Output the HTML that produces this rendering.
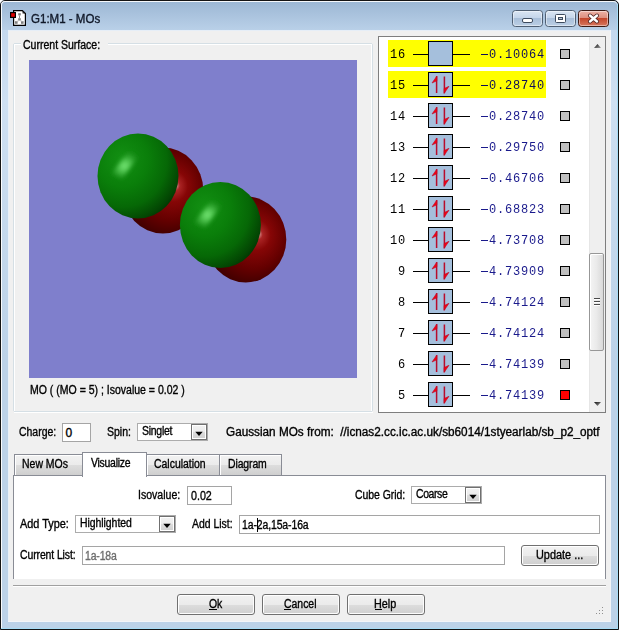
<!DOCTYPE html>
<html><head><meta charset="utf-8"><title>G1:M1 - MOs</title>
<style>
html,body{margin:0;padding:0;}
body{width:619px;height:630px;position:relative;overflow:hidden;background:#fff;font-family:"Liberation Sans", sans-serif;}
.t{position:absolute;line-height:20px;height:20px;white-space:pre;}
svg{position:absolute;}
</style></head><body>

<div style="position:absolute;left:0px;top:0px;width:619px;height:630px;background:#c4d7ec;border-radius:5px 5px 0 0;"></div>
<div style="position:absolute;left:1px;top:1px;width:617px;height:29px;background:linear-gradient(#9bb7d4 0%,#a9c2dd 45%,#b9d0e8 100%);border-radius:4px 4px 0 0;"></div>
<div style="position:absolute;left:1px;top:30px;width:7px;height:599px;background:linear-gradient(#c4d8ee,#cfe0f2 12%,#c4d8ec 35%,#bcd2e8 55%,#bcd2e8);"></div>
<div style="position:absolute;left:611px;top:30px;width:7px;height:599px;background:linear-gradient(#c4d8ee,#cfe0f2 12%,#c4d8ec 35%,#bcd2e8 55%,#bcd2e8);"></div>
<div style="position:absolute;left:1px;top:622px;width:617px;height:7px;background:#bcd2e8;"></div>
<div style="position:absolute;left:0;top:0;width:617px;height:628px;border:1px solid #141414;border-radius:5px 5px 0 0;"></div>
<div style="position:absolute;left:1px;top:1px;width:615px;height:627px;border:1px solid rgba(255,255,255,0.9);border-bottom:none;border-right:none;border-radius:4px 4px 0 0;"></div>
<div style="position:absolute;left:617px;top:4px;width:1px;height:625px;background:#a6dcf6;"></div>
<div style="position:absolute;left:1px;top:628px;width:617px;height:1px;background:#a6dcf6;"></div>
<div style="position:absolute;left:8px;top:30px;width:603px;height:592px;background:#f0f0f0;"></div>
<div style="position:absolute;left:8px;top:30px;width:603px;height:1px;background:#e6eef7;"></div>
<div style="position:absolute;left:8px;top:30px;width:1px;height:592px;background:#e9f0f8;"></div>
<div style="position:absolute;left:610px;top:30px;width:1px;height:592px;background:#f3f5f8;"></div>
<div style="position:absolute;left:8px;top:621px;width:603px;height:1px;background:#f3f5f8;"></div>
<svg style="left:9px;top:9px" width="18" height="18" viewBox="0 0 18 18">
<path d="M4.6 1.6 H13.4 L16.4 4.6 V16.4 H4.6 Z" fill="#fff" stroke="#000" stroke-width="1.2"/>
<path d="M13.4 1.6 L16.4 4.6 L13.6 4.4 Z" fill="#222"/>
<rect x="1.6" y="3.6" width="4.8" height="4.8" fill="#e00000" stroke="#000" stroke-width="1.2"/>
<rect x="9.2" y="4.2" width="2.6" height="2.2" fill="#808080"/>
<rect x="9.2" y="9.2" width="2.6" height="2.2" fill="#808080"/>
<rect x="10" y="6.4" width="1" height="2.8" fill="#909090"/>
<rect x="6" y="12.2" width="2.6" height="2.6" fill="#808080"/>
<rect x="12" y="12.2" width="2.6" height="2.6" fill="#808080"/>
<path d="M10.5 11.4 L7.5 12.5 M10.5 11.4 L13.5 12.5" stroke="#b0b0b0" stroke-width="0.8"/>
</svg>
<div class="t" style="left:30.50px;top:9px;font-size:12px;color:#101828;transform:scaleX(0.9611);transform-origin:0 0;-webkit-text-stroke:0.35px #101828;">G1:M1 - MOs</div>
<svg style="left:512px;top:10px" width="31" height="17" viewBox="0 0 31 17"><defs><linearGradient id="gcap" x1="0" y1="0" x2="0" y2="1"><stop offset="0" stop-color="#dbe6f3"/><stop offset="0.45" stop-color="#c5d6ea"/><stop offset="0.5" stop-color="#a9bfd9"/><stop offset="1" stop-color="#bcd0e6"/></linearGradient><linearGradient id="gclose" x1="0" y1="0" x2="0" y2="1"><stop offset="0" stop-color="#eeb4a8"/><stop offset="0.45" stop-color="#de9080"/><stop offset="0.5" stop-color="#c4472c"/><stop offset="1" stop-color="#d77a62"/></linearGradient></defs><rect x="0.5" y="0.5" width="30" height="16" rx="3" ry="3" fill="url(#gcap)" stroke="#4f5f73"/><rect x="1.5" y="1.5" width="28" height="14" rx="2" ry="2" fill="none" stroke="rgba(255,255,255,0.45)"/><rect x="10.5" y="8.5" width="10" height="4" rx="1.5" fill="#fff" stroke="#3d4b5e"/></svg>
<svg style="left:545px;top:10px" width="31" height="17" viewBox="0 0 31 17"><defs><linearGradient id="gcap" x1="0" y1="0" x2="0" y2="1"><stop offset="0" stop-color="#dbe6f3"/><stop offset="0.45" stop-color="#c5d6ea"/><stop offset="0.5" stop-color="#a9bfd9"/><stop offset="1" stop-color="#bcd0e6"/></linearGradient><linearGradient id="gclose" x1="0" y1="0" x2="0" y2="1"><stop offset="0" stop-color="#eeb4a8"/><stop offset="0.45" stop-color="#de9080"/><stop offset="0.5" stop-color="#c4472c"/><stop offset="1" stop-color="#d77a62"/></linearGradient></defs><rect x="0.5" y="0.5" width="30" height="16" rx="3" ry="3" fill="url(#gcap)" stroke="#4f5f73"/><rect x="1.5" y="1.5" width="28" height="14" rx="2" ry="2" fill="none" stroke="rgba(255,255,255,0.45)"/><rect x="10.5" y="4.5" width="10" height="8" rx="1" fill="#fff" stroke="#3d4b5e"/><rect x="13.5" y="7.5" width="4" height="2" fill="#b8c4d2" stroke="#3d4b5e"/></svg>
<svg style="left:578px;top:10px" width="31" height="17" viewBox="0 0 31 17"><defs><linearGradient id="gcap" x1="0" y1="0" x2="0" y2="1"><stop offset="0" stop-color="#dbe6f3"/><stop offset="0.45" stop-color="#c5d6ea"/><stop offset="0.5" stop-color="#a9bfd9"/><stop offset="1" stop-color="#bcd0e6"/></linearGradient><linearGradient id="gclose" x1="0" y1="0" x2="0" y2="1"><stop offset="0" stop-color="#eeb4a8"/><stop offset="0.45" stop-color="#de9080"/><stop offset="0.5" stop-color="#c4472c"/><stop offset="1" stop-color="#d77a62"/></linearGradient></defs><rect x="0.5" y="0.5" width="30" height="16" rx="3" ry="3" fill="url(#gclose)" stroke="#3c1a14"/><rect x="1.5" y="1.5" width="28" height="14" rx="2" ry="2" fill="none" stroke="rgba(255,255,255,0.45)"/><path d="M12 5.5 L19 11.5 M19 5.5 L12 11.5" stroke="#4a2020" stroke-width="4" stroke-linecap="round"/><path d="M12 5.5 L19 11.5 M19 5.5 L12 11.5" stroke="#fff" stroke-width="2.4" stroke-linecap="round"/></svg>
<div style="position:absolute;left:13px;top:43px;width:358px;height:367px;border:1px solid #d5dfe5;border-radius:2px;"></div>
<div style="position:absolute;left:14px;top:44px;width:1px;height:367px;background:#fff;"></div>
<div style="position:absolute;left:15px;top:44px;width:356px;height:1px;background:#fff;"></div>
<div style="position:absolute;left:371px;top:44px;width:1px;height:367px;background:#fff;"></div>
<div style="position:absolute;left:14px;top:412px;width:359px;height:1px;background:#fff;"></div>
<div style="position:absolute;left:21px;top:36px;width:87px;height:14px;background:#f0f0f0;"></div>
<div class="t" style="left:23.00px;top:35px;font-size:12px;color:#000;transform:scaleX(0.8759);transform-origin:0 0;-webkit-text-stroke:0.35px #000;">Current Surface:</div>
<svg style="left:29px;top:60px" width="328" height="318" viewBox="29 60 328 318">
<defs>
<radialGradient id="gg" cx="0.32" cy="0.33" r="0.8" fx="0.3" fy="0.3">
<stop offset="0" stop-color="#139013"/><stop offset="0.4" stop-color="#0a7e0a"/><stop offset="0.68" stop-color="#066806"/><stop offset="0.88" stop-color="#034603"/><stop offset="1" stop-color="#012a01"/>
</radialGradient>
<radialGradient id="gr" cx="0.55" cy="0.47" r="0.6" fx="0.66" fy="0.44">
<stop offset="0" stop-color="#dc9a9a"/><stop offset="0.1" stop-color="#aa2424"/><stop offset="0.3" stop-color="#860606"/><stop offset="0.65" stop-color="#640000"/><stop offset="1" stop-color="#380000"/>
</radialGradient>
<radialGradient id="hl" cx="0.42" cy="0.55" r="0.6">
<stop offset="0" stop-color="#7ef07e" stop-opacity="0.95"/><stop offset="0.4" stop-color="#58cc58" stop-opacity="0.75"/><stop offset="0.8" stop-color="#2ea02e" stop-opacity="0.25"/><stop offset="1" stop-color="#1a8a1a" stop-opacity="0"/>
</radialGradient>
<filter id="bl" x="-50%" y="-50%" width="200%" height="200%"><feGaussianBlur stdDeviation="2.2"/></filter>
</defs>
<rect x="29" y="60" width="328" height="318" fill="#7f7fcc"/>
<ellipse cx="162.9" cy="190.6" rx="40.5" ry="43" fill="url(#gr)"/>
<ellipse cx="138" cy="176" rx="40.5" ry="42.5" fill="url(#gg)"/>
<path d="M111 174 L128 152 L143 150 L122 179 Z" fill="url(#hl)" filter="url(#bl)"/>
<ellipse cx="245.8" cy="239.4" rx="40.5" ry="43" fill="url(#gr)"/>
<ellipse cx="220.4" cy="225" rx="40.5" ry="43" fill="url(#gg)"/>
<path d="M194 223 L211 201 L226 199 L205 228 Z" fill="url(#hl)" filter="url(#bl)"/>
</svg>
<div class="t" style="left:30.12px;top:380px;font-size:12px;color:#000;transform:scaleX(0.8760);transform-origin:0 0;-webkit-text-stroke:0.35px #000;">MO ( (MO = 5) ; Isovalue = 0.02 )</div>
<div style="position:absolute;left:378px;top:36px;width:226px;height:375px;border:1px solid #7e7e7e;background:#fff;"></div>
<div style="position:absolute;left:388px;top:40px;width:158px;height:27px;background:#ffff00;"></div>
<div class="t" style="left:390.4px;top:45px;font-size:13.33px;color:#000;font-family:'Liberation Mono', monospace;letter-spacing:0.889px;transform:scaleX(0.9);transform-origin:0 0;">16</div>
<div style="position:absolute;left:413px;top:54px;width:15px;height:1px;background:#000;"></div>
<div style="position:absolute;left:453px;top:54px;width:17px;height:1px;background:#000;"></div>
<div style="position:absolute;left:428px;top:41px;width:23px;height:23px;background:#a5bfdc;border:1px solid #000;"></div>
<div style="position:absolute;left:481px;top:54px;width:7px;height:1px;background:#0d0d5a;"></div>
<div class="t" style="left:488.6px;top:45px;font-size:13.33px;color:#0d0d5a;font-family:'Liberation Mono', monospace;letter-spacing:0.889px;transform:scaleX(0.9);transform-origin:0 0;">0.10064</div>
<div style="position:absolute;left:560px;top:49px;width:8px;height:8px;background:#c0c0c0;border:1px solid #000;"></div>
<div style="position:absolute;left:388px;top:71px;width:158px;height:27px;background:#ffff00;"></div>
<div class="t" style="left:390.4px;top:76px;font-size:13.33px;color:#000;font-family:'Liberation Mono', monospace;letter-spacing:0.889px;transform:scaleX(0.9);transform-origin:0 0;">15</div>
<div style="position:absolute;left:413px;top:85px;width:15px;height:1px;background:#000;"></div>
<div style="position:absolute;left:453px;top:85px;width:17px;height:1px;background:#000;"></div>
<div style="position:absolute;left:428px;top:72px;width:23px;height:23px;background:#a5bfdc;border:1px solid #000;"></div>
<svg style="left:428px;top:72px" width="25" height="25" viewBox="0 0 25 25">
<path d="M8.6 4.2 V21" stroke="#b80c2c" stroke-width="1.5"/><path d="M8.9 4 L4 11 L8.9 8.8 Z" fill="#f40010" stroke="#b80c2c" stroke-width="0.6" stroke-linejoin="round"/>
<path d="M16.4 4.5 V21.2" stroke="#b80c2c" stroke-width="1.5"/><path d="M16.1 21.4 L21 14.3 L16.1 16.5 Z" fill="#f40010" stroke="#b80c2c" stroke-width="0.6" stroke-linejoin="round"/>
</svg>
<div style="position:absolute;left:481px;top:85px;width:7px;height:1px;background:#0d0d5a;"></div>
<div class="t" style="left:488.6px;top:76px;font-size:13.33px;color:#0d0d5a;font-family:'Liberation Mono', monospace;letter-spacing:0.889px;transform:scaleX(0.9);transform-origin:0 0;">0.28740</div>
<div style="position:absolute;left:560px;top:80px;width:8px;height:8px;background:#c0c0c0;border:1px solid #000;"></div>
<div class="t" style="left:390.4px;top:107px;font-size:13.33px;color:#000;font-family:'Liberation Mono', monospace;letter-spacing:0.889px;transform:scaleX(0.9);transform-origin:0 0;">14</div>
<div style="position:absolute;left:413px;top:116px;width:15px;height:1px;background:#000;"></div>
<div style="position:absolute;left:453px;top:116px;width:17px;height:1px;background:#000;"></div>
<div style="position:absolute;left:428px;top:103px;width:23px;height:23px;background:#a5bfdc;border:1px solid #000;"></div>
<svg style="left:428px;top:103px" width="25" height="25" viewBox="0 0 25 25">
<path d="M8.6 4.2 V21" stroke="#b80c2c" stroke-width="1.5"/><path d="M8.9 4 L4 11 L8.9 8.8 Z" fill="#f40010" stroke="#b80c2c" stroke-width="0.6" stroke-linejoin="round"/>
<path d="M16.4 4.5 V21.2" stroke="#b80c2c" stroke-width="1.5"/><path d="M16.1 21.4 L21 14.3 L16.1 16.5 Z" fill="#f40010" stroke="#b80c2c" stroke-width="0.6" stroke-linejoin="round"/>
</svg>
<div style="position:absolute;left:481px;top:116px;width:7px;height:1px;background:#1a1a8c;"></div>
<div class="t" style="left:488.6px;top:107px;font-size:13.33px;color:#1a1a8c;font-family:'Liberation Mono', monospace;letter-spacing:0.889px;transform:scaleX(0.9);transform-origin:0 0;">0.28740</div>
<div style="position:absolute;left:560px;top:111px;width:8px;height:8px;background:#c0c0c0;border:1px solid #000;"></div>
<div class="t" style="left:390.4px;top:138px;font-size:13.33px;color:#000;font-family:'Liberation Mono', monospace;letter-spacing:0.889px;transform:scaleX(0.9);transform-origin:0 0;">13</div>
<div style="position:absolute;left:413px;top:147px;width:15px;height:1px;background:#000;"></div>
<div style="position:absolute;left:453px;top:147px;width:17px;height:1px;background:#000;"></div>
<div style="position:absolute;left:428px;top:134px;width:23px;height:23px;background:#a5bfdc;border:1px solid #000;"></div>
<svg style="left:428px;top:134px" width="25" height="25" viewBox="0 0 25 25">
<path d="M8.6 4.2 V21" stroke="#b80c2c" stroke-width="1.5"/><path d="M8.9 4 L4 11 L8.9 8.8 Z" fill="#f40010" stroke="#b80c2c" stroke-width="0.6" stroke-linejoin="round"/>
<path d="M16.4 4.5 V21.2" stroke="#b80c2c" stroke-width="1.5"/><path d="M16.1 21.4 L21 14.3 L16.1 16.5 Z" fill="#f40010" stroke="#b80c2c" stroke-width="0.6" stroke-linejoin="round"/>
</svg>
<div style="position:absolute;left:481px;top:147px;width:7px;height:1px;background:#1a1a8c;"></div>
<div class="t" style="left:488.6px;top:138px;font-size:13.33px;color:#1a1a8c;font-family:'Liberation Mono', monospace;letter-spacing:0.889px;transform:scaleX(0.9);transform-origin:0 0;">0.29750</div>
<div style="position:absolute;left:560px;top:142px;width:8px;height:8px;background:#c0c0c0;border:1px solid #000;"></div>
<div class="t" style="left:390.4px;top:169px;font-size:13.33px;color:#000;font-family:'Liberation Mono', monospace;letter-spacing:0.889px;transform:scaleX(0.9);transform-origin:0 0;">12</div>
<div style="position:absolute;left:413px;top:178px;width:15px;height:1px;background:#000;"></div>
<div style="position:absolute;left:453px;top:178px;width:17px;height:1px;background:#000;"></div>
<div style="position:absolute;left:428px;top:165px;width:23px;height:23px;background:#a5bfdc;border:1px solid #000;"></div>
<svg style="left:428px;top:165px" width="25" height="25" viewBox="0 0 25 25">
<path d="M8.6 4.2 V21" stroke="#b80c2c" stroke-width="1.5"/><path d="M8.9 4 L4 11 L8.9 8.8 Z" fill="#f40010" stroke="#b80c2c" stroke-width="0.6" stroke-linejoin="round"/>
<path d="M16.4 4.5 V21.2" stroke="#b80c2c" stroke-width="1.5"/><path d="M16.1 21.4 L21 14.3 L16.1 16.5 Z" fill="#f40010" stroke="#b80c2c" stroke-width="0.6" stroke-linejoin="round"/>
</svg>
<div style="position:absolute;left:481px;top:178px;width:7px;height:1px;background:#1a1a8c;"></div>
<div class="t" style="left:488.6px;top:169px;font-size:13.33px;color:#1a1a8c;font-family:'Liberation Mono', monospace;letter-spacing:0.889px;transform:scaleX(0.9);transform-origin:0 0;">0.46706</div>
<div style="position:absolute;left:560px;top:173px;width:8px;height:8px;background:#c0c0c0;border:1px solid #000;"></div>
<div class="t" style="left:390.4px;top:200px;font-size:13.33px;color:#000;font-family:'Liberation Mono', monospace;letter-spacing:0.889px;transform:scaleX(0.9);transform-origin:0 0;">11</div>
<div style="position:absolute;left:413px;top:209px;width:15px;height:1px;background:#000;"></div>
<div style="position:absolute;left:453px;top:209px;width:17px;height:1px;background:#000;"></div>
<div style="position:absolute;left:428px;top:196px;width:23px;height:23px;background:#a5bfdc;border:1px solid #000;"></div>
<svg style="left:428px;top:196px" width="25" height="25" viewBox="0 0 25 25">
<path d="M8.6 4.2 V21" stroke="#b80c2c" stroke-width="1.5"/><path d="M8.9 4 L4 11 L8.9 8.8 Z" fill="#f40010" stroke="#b80c2c" stroke-width="0.6" stroke-linejoin="round"/>
<path d="M16.4 4.5 V21.2" stroke="#b80c2c" stroke-width="1.5"/><path d="M16.1 21.4 L21 14.3 L16.1 16.5 Z" fill="#f40010" stroke="#b80c2c" stroke-width="0.6" stroke-linejoin="round"/>
</svg>
<div style="position:absolute;left:481px;top:209px;width:7px;height:1px;background:#1a1a8c;"></div>
<div class="t" style="left:488.6px;top:200px;font-size:13.33px;color:#1a1a8c;font-family:'Liberation Mono', monospace;letter-spacing:0.889px;transform:scaleX(0.9);transform-origin:0 0;">0.68823</div>
<div style="position:absolute;left:560px;top:204px;width:8px;height:8px;background:#c0c0c0;border:1px solid #000;"></div>
<div class="t" style="left:390.4px;top:231px;font-size:13.33px;color:#000;font-family:'Liberation Mono', monospace;letter-spacing:0.889px;transform:scaleX(0.9);transform-origin:0 0;">10</div>
<div style="position:absolute;left:413px;top:240px;width:15px;height:1px;background:#000;"></div>
<div style="position:absolute;left:453px;top:240px;width:17px;height:1px;background:#000;"></div>
<div style="position:absolute;left:428px;top:227px;width:23px;height:23px;background:#a5bfdc;border:1px solid #000;"></div>
<svg style="left:428px;top:227px" width="25" height="25" viewBox="0 0 25 25">
<path d="M8.6 4.2 V21" stroke="#b80c2c" stroke-width="1.5"/><path d="M8.9 4 L4 11 L8.9 8.8 Z" fill="#f40010" stroke="#b80c2c" stroke-width="0.6" stroke-linejoin="round"/>
<path d="M16.4 4.5 V21.2" stroke="#b80c2c" stroke-width="1.5"/><path d="M16.1 21.4 L21 14.3 L16.1 16.5 Z" fill="#f40010" stroke="#b80c2c" stroke-width="0.6" stroke-linejoin="round"/>
</svg>
<div style="position:absolute;left:481px;top:240px;width:7px;height:1px;background:#1a1a8c;"></div>
<div class="t" style="left:488.6px;top:231px;font-size:13.33px;color:#1a1a8c;font-family:'Liberation Mono', monospace;letter-spacing:0.889px;transform:scaleX(0.9);transform-origin:0 0;">4.73708</div>
<div style="position:absolute;left:560px;top:235px;width:8px;height:8px;background:#c0c0c0;border:1px solid #000;"></div>
<div class="t" style="left:398.4px;top:262px;font-size:13.33px;color:#000;font-family:'Liberation Mono', monospace;letter-spacing:0.889px;transform:scaleX(0.9);transform-origin:0 0;">9</div>
<div style="position:absolute;left:413px;top:271px;width:15px;height:1px;background:#000;"></div>
<div style="position:absolute;left:453px;top:271px;width:17px;height:1px;background:#000;"></div>
<div style="position:absolute;left:428px;top:258px;width:23px;height:23px;background:#a5bfdc;border:1px solid #000;"></div>
<svg style="left:428px;top:258px" width="25" height="25" viewBox="0 0 25 25">
<path d="M8.6 4.2 V21" stroke="#b80c2c" stroke-width="1.5"/><path d="M8.9 4 L4 11 L8.9 8.8 Z" fill="#f40010" stroke="#b80c2c" stroke-width="0.6" stroke-linejoin="round"/>
<path d="M16.4 4.5 V21.2" stroke="#b80c2c" stroke-width="1.5"/><path d="M16.1 21.4 L21 14.3 L16.1 16.5 Z" fill="#f40010" stroke="#b80c2c" stroke-width="0.6" stroke-linejoin="round"/>
</svg>
<div style="position:absolute;left:481px;top:271px;width:7px;height:1px;background:#1a1a8c;"></div>
<div class="t" style="left:488.6px;top:262px;font-size:13.33px;color:#1a1a8c;font-family:'Liberation Mono', monospace;letter-spacing:0.889px;transform:scaleX(0.9);transform-origin:0 0;">4.73909</div>
<div style="position:absolute;left:560px;top:266px;width:8px;height:8px;background:#c0c0c0;border:1px solid #000;"></div>
<div class="t" style="left:398.4px;top:293px;font-size:13.33px;color:#000;font-family:'Liberation Mono', monospace;letter-spacing:0.889px;transform:scaleX(0.9);transform-origin:0 0;">8</div>
<div style="position:absolute;left:413px;top:302px;width:15px;height:1px;background:#000;"></div>
<div style="position:absolute;left:453px;top:302px;width:17px;height:1px;background:#000;"></div>
<div style="position:absolute;left:428px;top:289px;width:23px;height:23px;background:#a5bfdc;border:1px solid #000;"></div>
<svg style="left:428px;top:289px" width="25" height="25" viewBox="0 0 25 25">
<path d="M8.6 4.2 V21" stroke="#b80c2c" stroke-width="1.5"/><path d="M8.9 4 L4 11 L8.9 8.8 Z" fill="#f40010" stroke="#b80c2c" stroke-width="0.6" stroke-linejoin="round"/>
<path d="M16.4 4.5 V21.2" stroke="#b80c2c" stroke-width="1.5"/><path d="M16.1 21.4 L21 14.3 L16.1 16.5 Z" fill="#f40010" stroke="#b80c2c" stroke-width="0.6" stroke-linejoin="round"/>
</svg>
<div style="position:absolute;left:481px;top:302px;width:7px;height:1px;background:#1a1a8c;"></div>
<div class="t" style="left:488.6px;top:293px;font-size:13.33px;color:#1a1a8c;font-family:'Liberation Mono', monospace;letter-spacing:0.889px;transform:scaleX(0.9);transform-origin:0 0;">4.74124</div>
<div style="position:absolute;left:560px;top:297px;width:8px;height:8px;background:#c0c0c0;border:1px solid #000;"></div>
<div class="t" style="left:398.4px;top:324px;font-size:13.33px;color:#000;font-family:'Liberation Mono', monospace;letter-spacing:0.889px;transform:scaleX(0.9);transform-origin:0 0;">7</div>
<div style="position:absolute;left:413px;top:333px;width:15px;height:1px;background:#000;"></div>
<div style="position:absolute;left:453px;top:333px;width:17px;height:1px;background:#000;"></div>
<div style="position:absolute;left:428px;top:320px;width:23px;height:23px;background:#a5bfdc;border:1px solid #000;"></div>
<svg style="left:428px;top:320px" width="25" height="25" viewBox="0 0 25 25">
<path d="M8.6 4.2 V21" stroke="#b80c2c" stroke-width="1.5"/><path d="M8.9 4 L4 11 L8.9 8.8 Z" fill="#f40010" stroke="#b80c2c" stroke-width="0.6" stroke-linejoin="round"/>
<path d="M16.4 4.5 V21.2" stroke="#b80c2c" stroke-width="1.5"/><path d="M16.1 21.4 L21 14.3 L16.1 16.5 Z" fill="#f40010" stroke="#b80c2c" stroke-width="0.6" stroke-linejoin="round"/>
</svg>
<div style="position:absolute;left:481px;top:333px;width:7px;height:1px;background:#1a1a8c;"></div>
<div class="t" style="left:488.6px;top:324px;font-size:13.33px;color:#1a1a8c;font-family:'Liberation Mono', monospace;letter-spacing:0.889px;transform:scaleX(0.9);transform-origin:0 0;">4.74124</div>
<div style="position:absolute;left:560px;top:328px;width:8px;height:8px;background:#c0c0c0;border:1px solid #000;"></div>
<div class="t" style="left:398.4px;top:355px;font-size:13.33px;color:#000;font-family:'Liberation Mono', monospace;letter-spacing:0.889px;transform:scaleX(0.9);transform-origin:0 0;">6</div>
<div style="position:absolute;left:413px;top:364px;width:15px;height:1px;background:#000;"></div>
<div style="position:absolute;left:453px;top:364px;width:17px;height:1px;background:#000;"></div>
<div style="position:absolute;left:428px;top:351px;width:23px;height:23px;background:#a5bfdc;border:1px solid #000;"></div>
<svg style="left:428px;top:351px" width="25" height="25" viewBox="0 0 25 25">
<path d="M8.6 4.2 V21" stroke="#b80c2c" stroke-width="1.5"/><path d="M8.9 4 L4 11 L8.9 8.8 Z" fill="#f40010" stroke="#b80c2c" stroke-width="0.6" stroke-linejoin="round"/>
<path d="M16.4 4.5 V21.2" stroke="#b80c2c" stroke-width="1.5"/><path d="M16.1 21.4 L21 14.3 L16.1 16.5 Z" fill="#f40010" stroke="#b80c2c" stroke-width="0.6" stroke-linejoin="round"/>
</svg>
<div style="position:absolute;left:481px;top:364px;width:7px;height:1px;background:#1a1a8c;"></div>
<div class="t" style="left:488.6px;top:355px;font-size:13.33px;color:#1a1a8c;font-family:'Liberation Mono', monospace;letter-spacing:0.889px;transform:scaleX(0.9);transform-origin:0 0;">4.74139</div>
<div style="position:absolute;left:560px;top:359px;width:8px;height:8px;background:#c0c0c0;border:1px solid #000;"></div>
<div class="t" style="left:398.4px;top:386px;font-size:13.33px;color:#000;font-family:'Liberation Mono', monospace;letter-spacing:0.889px;transform:scaleX(0.9);transform-origin:0 0;">5</div>
<div style="position:absolute;left:413px;top:395px;width:15px;height:1px;background:#000;"></div>
<div style="position:absolute;left:453px;top:395px;width:17px;height:1px;background:#000;"></div>
<div style="position:absolute;left:428px;top:382px;width:23px;height:23px;background:#a5bfdc;border:1px solid #000;"></div>
<svg style="left:428px;top:382px" width="25" height="25" viewBox="0 0 25 25">
<path d="M8.6 4.2 V21" stroke="#b80c2c" stroke-width="1.5"/><path d="M8.9 4 L4 11 L8.9 8.8 Z" fill="#f40010" stroke="#b80c2c" stroke-width="0.6" stroke-linejoin="round"/>
<path d="M16.4 4.5 V21.2" stroke="#b80c2c" stroke-width="1.5"/><path d="M16.1 21.4 L21 14.3 L16.1 16.5 Z" fill="#f40010" stroke="#b80c2c" stroke-width="0.6" stroke-linejoin="round"/>
</svg>
<div style="position:absolute;left:481px;top:395px;width:7px;height:1px;background:#1a1a8c;"></div>
<div class="t" style="left:488.6px;top:386px;font-size:13.33px;color:#1a1a8c;font-family:'Liberation Mono', monospace;letter-spacing:0.889px;transform:scaleX(0.9);transform-origin:0 0;">4.74139</div>
<div style="position:absolute;left:560px;top:390px;width:8px;height:8px;background:#ff0000;border:1px solid #000;"></div>
<div style="position:absolute;left:589px;top:37px;width:16px;height:375px;background:#efefef;border-left:1px solid #e6e6e6;box-sizing:border-box;"></div>
<svg style="left:589px;top:37px" width="16" height="375" viewBox="0 0 16 375"><defs><linearGradient id="sa" x1="0" y1="0" x2="1" y2="1"><stop offset="0" stop-color="#101010"/><stop offset="1" stop-color="#a0a0a0"/></linearGradient></defs><path d="M5 11 L8.5 7 L12 11 Z" fill="url(#sa)"/><path d="M5 365 L8.5 369 L12 365 Z" fill="url(#sa)"/></svg>
<div style="position:absolute;left:589px;top:253px;width:13px;height:96px;border:1px solid #979797;border-radius:2px;background:linear-gradient(90deg,#f4f4f4,#eaeaea 50%,#d9d9d9);box-shadow:inset 1px 1px 0 #fff;"></div>
<svg style="left:589px;top:253px" width="16" height="98" viewBox="0 0 16 98"><path d="M5 45.5 H11 M5 48.5 H11 M5 51.5 H11" stroke="#4a4a4a" stroke-width="1"/><path d="M5 46.5 H11 M5 49.5 H11 M5 52.5 H11" stroke="#ffffff" stroke-width="1"/></svg>
<div class="t" style="left:18.60px;top:422px;font-size:12px;color:#000;transform:scaleX(0.8714);transform-origin:0 0;-webkit-text-stroke:0.35px #000;">Charge:</div>
<div style="position:absolute;left:62px;top:423px;width:27px;height:17px;border:1px solid #a5a5a5;background:#fff;"></div>
<div class="t" style="left:65.60px;top:423px;font-size:12px;color:#000;-webkit-text-stroke:0.35px #000;">0</div>
<div class="t" style="left:106.52px;top:422px;font-size:12px;color:#000;transform:scaleX(0.8769);transform-origin:0 0;-webkit-text-stroke:0.35px #000;">Spin:</div>
<div style="position:absolute;left:137px;top:423px;width:69px;height:16px;border:1px solid #acacac;background:#fff;"></div>
<div style="position:absolute;left:191px;top:424px;width:14px;height:14px;border:1px solid #707070;box-shadow:inset 1px 1px 0 #fff, inset -1px -1px 0 #fff;background:linear-gradient(#f2f2f2,#ebebeb 50%,#dddddd 51%,#cfcfcf);"></div>
<svg style="left:195px;top:431px" width="10" height="6" viewBox="0 0 10 6"><path d="M0.3 0.8 H7.7 L4 5 Z" fill="#000"/></svg>
<div class="t" style="left:141.73px;top:421px;font-size:12px;color:#000;letter-spacing:-0.291px;transform:scaleX(0.8700);transform-origin:0 0;-webkit-text-stroke:0.35px #000;">Singlet</div>
<div class="t" style="left:225.90px;top:422px;font-size:12px;color:#000;transform:scaleX(0.9793);transform-origin:0 0;-webkit-text-stroke:0.35px #000;">Gaussian MOs from:  //icnas2.cc.ic.ac.uk/sb6014/1styearlab/sb_p2_optf</div>
<div style="position:absolute;left:13px;top:475px;width:591px;height:103px;border:1px solid #898c95;border-bottom:none;background:#fff;"></div>
<div style="position:absolute;left:14px;top:454px;width:68px;height:20px;border:1px solid #898c95;border-bottom:none;background:linear-gradient(#f2f2f2,#ebebeb 50%,#dddddd 51%,#cfcfcf);box-shadow:inset 1px 1px 0 #fff;"></div>
<div class="t" style="left:21.93px;top:454px;font-size:12px;color:#000;transform:scaleX(0.8731);transform-origin:0 0;-webkit-text-stroke:0.35px #000;">New MOs</div>
<div style="position:absolute;left:146px;top:454px;width:73px;height:20px;border:1px solid #898c95;border-bottom:none;background:linear-gradient(#f2f2f2,#ebebeb 50%,#dddddd 51%,#cfcfcf);box-shadow:inset 1px 1px 0 #fff;"></div>
<div class="t" style="left:153.70px;top:454px;font-size:12px;color:#000;transform:scaleX(0.8700);transform-origin:0 0;-webkit-text-stroke:0.35px #000;">Calculation</div>
<div style="position:absolute;left:219px;top:454px;width:61px;height:20px;border:1px solid #898c95;border-bottom:none;background:linear-gradient(#f2f2f2,#ebebeb 50%,#dddddd 51%,#cfcfcf);box-shadow:inset 1px 1px 0 #fff;"></div>
<div class="t" style="left:227.53px;top:454px;font-size:12px;color:#000;letter-spacing:-0.130px;transform:scaleX(0.8700);transform-origin:0 0;-webkit-text-stroke:0.35px #000;">Diagram</div>
<div style="position:absolute;left:82px;top:452px;width:63px;height:24px;border:1px solid #898c95;border-bottom:none;background:#fff;"></div>
<div class="t" style="left:91.00px;top:453px;font-size:12px;color:#000;letter-spacing:-0.296px;transform:scaleX(0.8700);transform-origin:0 0;-webkit-text-stroke:0.35px #000;">Visualize</div>
<div class="t" style="left:137.82px;top:485px;font-size:12px;color:#000;transform:scaleX(0.8783);transform-origin:0 0;-webkit-text-stroke:0.35px #000;">Isovalue:</div>
<div style="position:absolute;left:187px;top:486px;width:43px;height:17px;border:1px solid #a5a5a5;background:#fff;"></div>
<div class="t" style="left:190.50px;top:486px;font-size:12px;color:#000;transform:scaleX(0.8913);transform-origin:0 0;-webkit-text-stroke:0.35px #000;">0.02</div>
<div class="t" style="left:354.80px;top:485px;font-size:12px;color:#000;letter-spacing:-0.050px;transform:scaleX(0.8700);transform-origin:0 0;-webkit-text-stroke:0.35px #000;">Cube Grid:</div>
<div style="position:absolute;left:411px;top:486px;width:69px;height:16px;border:1px solid #acacac;background:#fff;"></div>
<div style="position:absolute;left:465px;top:487px;width:14px;height:14px;border:1px solid #707070;box-shadow:inset 1px 1px 0 #fff, inset -1px -1px 0 #fff;background:linear-gradient(#f2f2f2,#ebebeb 50%,#dddddd 51%,#cfcfcf);"></div>
<svg style="left:469px;top:494px" width="10" height="6" viewBox="0 0 10 6"><path d="M0.3 0.8 H7.7 L4 5 Z" fill="#000"/></svg>
<div class="t" style="left:415.80px;top:484px;font-size:12px;color:#000;letter-spacing:-0.444px;transform:scaleX(0.8700);transform-origin:0 0;-webkit-text-stroke:0.35px #000;">Coarse</div>
<div class="t" style="left:20.10px;top:514px;font-size:12px;color:#000;transform:scaleX(0.9075);transform-origin:0 0;-webkit-text-stroke:0.35px #000;">Add Type:</div>
<div style="position:absolute;left:75px;top:515px;width:99px;height:16px;border:1px solid #acacac;background:#fff;"></div>
<div style="position:absolute;left:159px;top:516px;width:14px;height:14px;border:1px solid #707070;box-shadow:inset 1px 1px 0 #fff, inset -1px -1px 0 #fff;background:linear-gradient(#f2f2f2,#ebebeb 50%,#dddddd 51%,#cfcfcf);"></div>
<svg style="left:163px;top:523px" width="10" height="6" viewBox="0 0 10 6"><path d="M0.3 0.8 H7.7 L4 5 Z" fill="#000"/></svg>
<div class="t" style="left:79.93px;top:513px;font-size:12px;color:#000;letter-spacing:-0.049px;transform:scaleX(0.8700);transform-origin:0 0;-webkit-text-stroke:0.35px #000;">Highlighted</div>
<div class="t" style="left:192.40px;top:514px;font-size:12px;color:#000;transform:scaleX(0.8700);transform-origin:0 0;-webkit-text-stroke:0.35px #000;">Add List:</div>
<div style="position:absolute;left:239px;top:515px;width:359px;height:17px;border:1px solid #a5a5a5;background:#fff;"></div>
<div class="t" style="left:242.43px;top:515px;font-size:12px;color:#000;letter-spacing:-0.121px;transform:scaleX(0.8700);transform-origin:0 0;-webkit-text-stroke:0.35px #000;">1a-2a,15a-16a</div>
<div style="position:absolute;left:257px;top:518px;width:1px;height:14px;background:#000;"></div>
<div class="t" style="left:19.70px;top:545px;font-size:12px;color:#000;letter-spacing:-0.120px;transform:scaleX(0.8700);transform-origin:0 0;-webkit-text-stroke:0.35px #000;">Current List:</div>
<div style="position:absolute;left:82px;top:546px;width:421px;height:17px;border:1px solid #a5a5a5;background:#fff;"></div>
<div class="t" style="left:84.88px;top:546px;font-size:12px;color:#6d6d6d;letter-spacing:-0.170px;transform:scaleX(0.8700);transform-origin:0 0;-webkit-text-stroke:0.35px #6d6d6d;">1a-18a</div>
<div style="position:absolute;left:521px;top:545px;width:76px;height:19px;border:1px solid #707070;border-radius:3px;background:linear-gradient(#f2f2f2,#ebebeb 50%,#dddddd 51%,#cfcfcf);box-shadow:inset 1px 1px 0 #fff, inset -1px -1px 0 #fcfcfc;"></div>
<div class="t" style="left:535.89px;top:545px;font-size:12px;color:#000;transform:scaleX(0.9080);transform-origin:0 0;-webkit-text-stroke:0.35px #000;">Update ...</div>
<div style="position:absolute;left:13px;top:585px;width:593px;height:1px;background:#a0a0a0;"></div>
<div style="position:absolute;left:13px;top:586px;width:593px;height:1px;background:#fff;"></div>
<div style="position:absolute;left:177px;top:594px;width:76px;height:19px;border:1px solid #707070;border-radius:3px;background:linear-gradient(#f2f2f2,#ebebeb 50%,#dddddd 51%,#cfcfcf);box-shadow:inset 1px 1px 0 #fff, inset -1px -1px 0 #fcfcfc;"></div>
<div class="t" style="left:209.00px;top:594px;font-size:12px;color:#000;letter-spacing:-0.057px;transform:scaleX(0.8700);transform-origin:0 0;-webkit-text-stroke:0.35px #000;">Ok</div>
<div style="position:absolute;left:262px;top:594px;width:76px;height:19px;border:1px solid #707070;border-radius:3px;background:linear-gradient(#f2f2f2,#ebebeb 50%,#dddddd 51%,#cfcfcf);box-shadow:inset 1px 1px 0 #fff, inset -1px -1px 0 #fcfcfc;"></div>
<div class="t" style="left:283.75px;top:594px;font-size:12px;color:#000;letter-spacing:-0.009px;transform:scaleX(0.8700);transform-origin:0 0;-webkit-text-stroke:0.35px #000;">Cancel</div>
<div style="position:absolute;left:347px;top:594px;width:76px;height:19px;border:1px solid #707070;border-radius:3px;background:linear-gradient(#f2f2f2,#ebebeb 50%,#dddddd 51%,#cfcfcf);box-shadow:inset 1px 1px 0 #fff, inset -1px -1px 0 #fcfcfc;"></div>
<div class="t" style="left:374.10px;top:594px;font-size:12px;color:#000;transform:scaleX(0.9000);transform-origin:0 0;-webkit-text-stroke:0.35px #000;">Help</div>
<div style="position:absolute;left:209px;top:609px;width:8px;height:1px;background:#000;"></div>
<div style="position:absolute;left:284px;top:609px;width:7px;height:1px;background:#000;"></div>
<div style="position:absolute;left:375px;top:609px;width:7px;height:1px;background:#000;"></div>
<svg style="left:594px;top:607px" width="12" height="12" viewBox="0 0 12 12"><rect x="8" y="0" width="1" height="1" fill="#909090"/><rect x="5" y="3" width="1" height="1" fill="#909090"/><rect x="8" y="3" width="1" height="1" fill="#909090"/><rect x="2" y="6" width="1" height="1" fill="#909090"/><rect x="5" y="6" width="1" height="1" fill="#909090"/><rect x="8" y="6" width="1" height="1" fill="#909090"/></svg>
</body></html>
